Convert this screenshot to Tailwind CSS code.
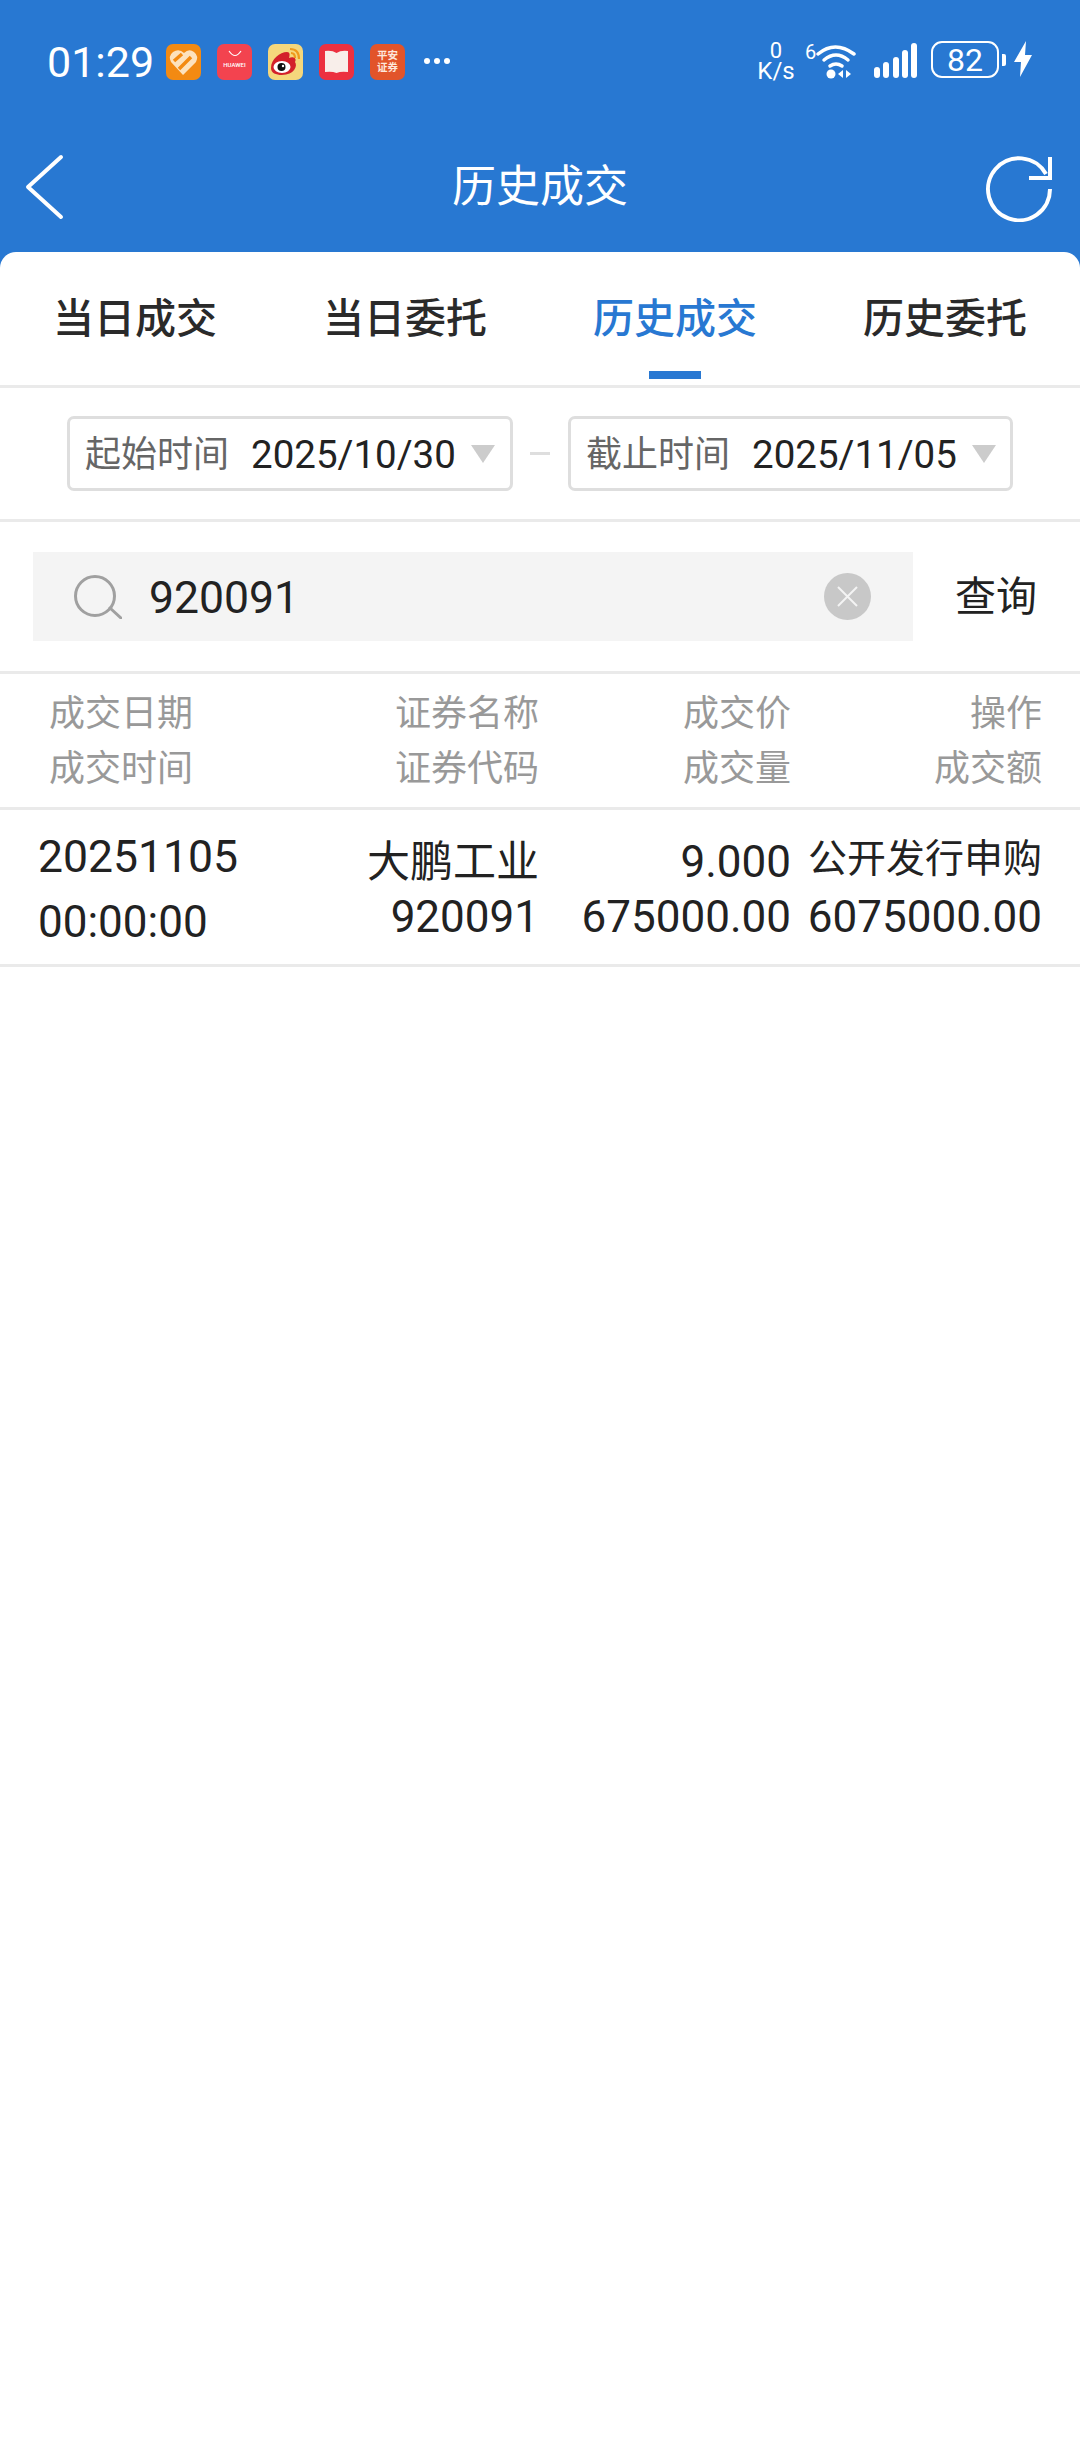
<!DOCTYPE html>
<html lang="zh-CN">
<head>
  <meta charset="UTF-8" />
  <meta name="viewport" content="width=device-width, initial-scale=1.0" />
  <title>历史成交</title>
  <script src="https://cdn.jsdelivr.net/npm/@tailwindcss/browser@4"></script>
</head>
<body class="bg-white font-['Roboto','Noto_Sans_CJK_SC',sans-serif] text-[#222]">
  <div class="w-[1080px] h-[2440px] bg-[#2878d2] flex flex-col overflow-hidden">

    <!-- status bar -->
    <div class="h-[124px] pt-[41px] pl-[47px] pr-[48px] flex items-start text-white">
      <span class="text-[43px] leading-[42px] w-[119px]">01:29</span>
      <div class="flex gap-[16px] mt-[3px]">
        <svg class="w-[35px] h-[36px]" viewBox="0 0 35 36">
          <rect width="35" height="36" rx="7" fill="#f38a12" />
          <path d="M17 31 L5 18 Q2 12 7 8 Q13 4 18 9 Q23 4 28 8 Q33 12 30 18 Z" fill="#fde2bd" />
          <path d="M8 17 L16 10 M13 25 L25 13" stroke="#f38a12" stroke-width="3.5" />
        </svg>
        <div class="w-[35px] h-[36px] rounded-[7px] bg-[#f3434f] flex flex-col items-center">
          <svg class="w-[14px] h-[8px] mt-[6px]" viewBox="0 0 14 8"><path d="M1 1 Q7 10 13 1" fill="none" stroke="#fff" stroke-width="1.2" /></svg>
          <span class="text-[6px] leading-[8px] mt-[3px] font-medium">HUAWEI</span>
        </div>
        <svg class="w-[35px] h-[36px]" viewBox="0 0 35 36">
          <rect width="35" height="36" rx="7" fill="#f5d77c" />
          <path d="M3 24 C3 15 12 8 19 8 C22 8 22 11 21 14 C26 12 29 15 27 18 C30 22 26 31 14 31 C8 31 3 29 3 24 Z" fill="#d3202a" />
          <ellipse cx="14" cy="23" rx="8.5" ry="6" fill="#fff" />
          <circle cx="13.500" cy="23" r="4" fill="#111" />
          <circle cx="15" cy="22" r="1.200" fill="#fff" />
          <path d="M22 5 Q31 5 31 15 M23 9 Q27 9 27 14" fill="none" stroke="#ef9a1c" stroke-width="2.200" />
        </svg>
        <svg class="w-[35px] h-[36px]" viewBox="0 0 35 36">
          <rect width="35" height="36" rx="7" fill="#ec3040" />
          <path d="M6 7 Q13 6 17.500 9 Q22 6 29 7 V28 Q22 27 17.500 29 Q13 27 6 28 Z" fill="#f8eeea" />
        </svg>
        <div class="w-[35px] h-[36px] rounded-[7px] bg-[#e2542a] flex flex-col items-center justify-center text-[10.5px] leading-[12px] font-bold text-[#fde8dc]">
          <span>平安</span>
          <span>证券</span>
        </div>
      </div>
      <div class="flex gap-[4px] ml-[19px] mt-[17px]">
        <span class="w-[6px] h-[6px] rounded-full bg-white"></span>
        <span class="w-[6px] h-[6px] rounded-full bg-white"></span>
        <span class="w-[6px] h-[6px] rounded-full bg-white"></span>
      </div>

      <div class="ml-auto flex items-start">
        <div class="w-[36px] flex flex-col items-center text-[22px] leading-[21px] -mt-[1px]">
          <span>0</span>
          <span class="text-[24px] leading-[21px]">K/s</span>
        </div>
        <div class="relative w-[40px] h-[36px] ml-[22px] mt-[2px]">
          <span class="absolute -left-[11px] top-[-1px] text-[20px] leading-[20px]">6</span>
          <svg class="absolute left-0 top-0 w-[40px] h-[36px]" viewBox="0 0 40 36">
            <path d="M2 11 Q19 -3 38 11" fill="none" stroke="#fff" stroke-width="3.500" stroke-linecap="round" />
            <path d="M8 17 Q20 7 32 17" fill="none" stroke="#fff" stroke-width="3.500" stroke-linecap="round" />
            <path d="M14 23 Q20 19 26 23" fill="none" stroke="#fff" stroke-width="3.500" stroke-linecap="round" />
            <circle cx="15" cy="31" r="4.500" fill="#fff" />
            <path d="M22 31 L27 27 V35 Z M30 27 L35 31 L30 35 Z" fill="#fff" />
          </svg>
        </div>
        <div class="flex items-end gap-[3.25px] h-[35px] ml-[18px] mt-[2px]">
          <span class="w-[6px] h-[11px] rounded-full bg-white"></span>
          <span class="w-[6px] h-[16px] rounded-full bg-white"></span>
          <span class="w-[6px] h-[21px] rounded-full bg-white"></span>
          <span class="w-[6px] h-[28px] rounded-full bg-white"></span>
          <span class="w-[6px] h-[35px] rounded-full bg-white"></span>
        </div>
        <div class="w-[68px] h-[37px] ml-[14px] rounded-[11px] border-[2px] border-white flex items-center justify-center text-[32px] leading-none">82</div>
        <span class="w-[4px] h-[12px] ml-[3px] mt-[13px] rounded-r-[2px] bg-white"></span>
        <svg class="w-[18px] h-[36px] ml-[8px]" viewBox="0 0 18 36">
          <path d="M12 0 L0 21 H7 L6 36 L18 14 H11 Z" fill="#fff" />
        </svg>
      </div>
    </div>

    <!-- nav -->
    <div class="relative h-[128px] flex items-start justify-center text-white">
      <svg class="absolute left-[24px] top-[30px] w-[42px] h-[66px]" viewBox="0 0 42 66">
        <path d="M37 3 L4 33 L37 63" fill="none" stroke="#fff" stroke-width="4" stroke-linecap="round" stroke-linejoin="round" />
      </svg>
      <span class="text-[44px] leading-[60px] mt-[33px]">历史成交</span>
      <svg class="absolute left-[985px] top-[30px] w-[68px] h-[68px]" viewBox="0 0 68 68">
        <path d="M65 35 A31 31 0 1 1 61 20" fill="none" stroke="#fff" stroke-width="4" />
        <path d="M65 3 V24 H44" fill="none" stroke="#fff" stroke-width="4" />
      </svg>
    </div>

    <!-- card -->
    <div class="flex-1 bg-white rounded-t-[16px]">
      <div class="h-[136px] grid grid-cols-4 border-b-[3px] border-[#eaeaea]">
        <div class="flex justify-center pt-[40px]"><span class="text-[41px] leading-[54px] font-medium text-[#2a2a2a]">当日成交</span></div>
        <div class="flex justify-center pt-[40px]"><span class="text-[41px] leading-[54px] font-medium text-[#2a2a2a]">当日委托</span></div>
        <div class="relative flex justify-center pt-[40px]">
          <span class="text-[41px] leading-[54px] font-medium text-[#2878d2]">历史成交</span>
          <span class="absolute left-[109px] top-[119px] w-[52px] h-[8px] bg-[#2878d2]"></span>
        </div>
        <div class="flex justify-center pt-[40px]"><span class="text-[41px] leading-[54px] font-medium text-[#2a2a2a]">历史委托</span></div>
      </div>

      <!-- dates -->
      <div class="h-[134px] pl-[67px] pr-[67px] pt-[28px] flex items-start border-b-[3px] border-[#eaeaea]">
        <div class="w-[446px] h-[75px] border-[3px] border-[#dedede] rounded-[7px] flex items-center pl-[15px]">
          <span class="text-[36px] pt-[3px] text-[#666] w-[166px]">起始时间</span>
          <span class="text-[38.5px] pt-[3px] text-[#222]">2025/10/30</span>
          <svg class="w-[24px] h-[18px] ml-[15px]" viewBox="0 0 24 18"><path d="M0 0 H24 L12 18 Z" fill="#ccc" /></svg>
        </div>
        <span class="w-[20px] h-[3px] mt-[36px] ml-[17px] mr-[18px] bg-[#dedede]"></span>
        <div class="w-[445px] h-[75px] border-[3px] border-[#dedede] rounded-[7px] flex items-center pl-[15px]">
          <span class="text-[36px] pt-[3px] text-[#666] w-[166px]">截止时间</span>
          <span class="text-[38.5px] pt-[3px] text-[#222]">2025/11/05</span>
          <svg class="w-[24px] h-[18px] ml-[15px]" viewBox="0 0 24 18"><path d="M0 0 H24 L12 18 Z" fill="#ccc" /></svg>
        </div>
      </div>

      <!-- search -->
      <div class="h-[152px] pl-[33px] pt-[30px] flex items-start border-b-[3px] border-[#eaeaea]">
        <div class="w-[880px] h-[89px] bg-[#f4f4f4] flex items-center pl-[41px]">
          <svg class="w-[48px] h-[44px]" viewBox="0 0 48 44">
            <circle cx="21" cy="21" r="19.500" fill="none" stroke="#a0a0a0" stroke-width="3" />
            <path d="M36 33 L47 43" stroke="#a0a0a0" stroke-width="3" stroke-linecap="round" />
          </svg>
          <span class="text-[44.5px] pt-[3px] ml-[27px]">920091</span>
          <svg class="w-[47px] h-[47px] ml-auto mr-[42px]" viewBox="0 0 47 47">
            <circle cx="23.500" cy="23.500" r="23.500" fill="#c8c8c8" />
            <path d="M14 14 L33 33 M33 14 L14 33" stroke="#f4f4f4" stroke-width="2" />
          </svg>
        </div>
        <span class="text-[41px] leading-[89px] pt-[1px] ml-[42px]">查询</span>
      </div>

      <!-- table header -->
      <div class="h-[136px] pt-[13px] pr-[38px] grid grid-cols-[301px_238px_252px_251px] border-b-[3px] border-[#eaeaea] text-[36px] leading-[55px] text-[#999]">
        <div class="pl-[49px]"><div>成交日期</div><div>成交时间</div></div>
        <div class="text-right"><div>证券名称</div><div>证券代码</div></div>
        <div class="text-right"><div>成交价</div><div>成交量</div></div>
        <div class="text-right"><div>操作</div><div>成交额</div></div>
      </div>

      <!-- row -->
      <div class="h-[157px] pr-[38px] grid grid-cols-[301px_238px_252px_251px] border-b-[3px] border-[#eaeaea] text-[44px]">
        <div class="pl-[38px] pt-[15px] leading-[65px]"><div class="text-[44.5px]">20251105</div><div>00:00:00</div></div>
        <div class="text-right pt-[25px] leading-[55px]"><div class="text-[43px]">大鹏工业</div><div>920091</div></div>
        <div class="text-right pt-[25px] leading-[55px]"><div>9.000</div><div>675000.00</div></div>
        <div class="text-right pt-[20px] leading-[58px]"><div class="text-[39px]">公开发行申购</div><div>6075000.00</div></div>
      </div>
    </div>
  </div>
</body>
</html>
